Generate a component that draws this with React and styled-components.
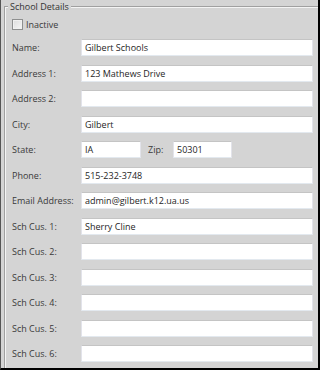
import styled, { createGlobalStyle } from "styled-components";

const GlobalStyle = createGlobalStyle`
    html, body {
        margin: 0;
        padding: 0;
        background: #d4d4d4;
    }
`

const Frame = styled.div`
    width: 320px;
    height: 370px;
    box-sizing: border-box;
    background: #d4d4d4;
    border-right: 2px solid #000;
    border-bottom: 2px solid #000;
    border-left: 1px solid #555;
    padding-left: 3px;
    overflow: hidden;
    font-family: "Open Sans", "Noto Sans", sans-serif;
    font-size: 9px;
    color: #3a3a3a;
`
const Group = styled.fieldset`
    margin: 0;
    padding: 0 5px 0 6px;
    min-width: 0;
    border: 2px groove #f4f4f4;
    border-right: none;
    border-bottom: none;
    height: 100%;
    box-sizing: border-box;
`
const Legend = styled.legend`
    margin-left: -4px;
    padding: 0 2px;
    line-height: 14px;
    font-size: 9px;
    color: #333;
`
const CheckRow = styled.label`
    height: 21px;
    display: flex;
    align-items: center;
    gap: 3px;
`
const Box = styled.span`
    width: 11px;
    height: 11px;
    box-sizing: border-box;
    border: 1px solid #8e8f8f;
    background: linear-gradient(135deg, #dcdcdc 0%, #f6f6f6 100%);
    box-shadow: inset 0 0 0 1px #f0f0f0;
`
const Row = styled.div`
    display: grid;
    grid-template-columns: 69px 1fr;
    align-items: center;
    height: 25.5px;
`
const Label = styled.span`
    white-space: nowrap;
`
const Inline = styled.div`
    display: flex;
    align-items: center;
`
const Field = styled.input`
    box-sizing: border-box;
    width: ${props => props.w ? props.w + 'px' : '100%'};
    height: 17px;
    margin: 0;
    padding: 0 3px;
    border: 1px solid;
    border-color: #c4c4c4 #e2e3ea #e3e9ef #e2e3ea;
    background: #fff;
    font-family: "Open Sans", "Noto Sans", sans-serif;
    font-size: 9px;
    color: #1e1e1e;
    outline: none;
`
const ZipLabel = styled.span`
    margin-left: 7px;
    width: 25px;
`

const rows = [
    ["Name:", "Gilbert Schools"],
    ["Address 1:", "123 Mathews Drive"],
    ["Address 2:", ""],
    ["City:", "Gilbert"],
]
const rowsAfter = [
    ["Phone:", "515-232-3748"],
    ["Email Address:", "admin@gilbert.k12.ua.us"],
    ["Sch Cus. 1:", "Sherry Cline"],
    ["Sch Cus. 2:", ""],
    ["Sch Cus. 3:", ""],
    ["Sch Cus. 4:", ""],
    ["Sch Cus. 5:", ""],
    ["Sch Cus. 6:", ""],
]

const App = () => {
    return (
        <>
            <GlobalStyle />
            <Frame>
                <Group>
                    <Legend>School Details</Legend>
                    <CheckRow>
                        <Box />
                        <span>Inactive</span>
                    </CheckRow>
                    {rows.map(([label, value]) => (
                        <Row key={label}>
                            <Label>{label}</Label>
                            <Field readOnly defaultValue={value} />
                        </Row>
                    ))}
                    <Row>
                        <Label>State:</Label>
                        <Inline>
                            <Field readOnly defaultValue="IA" w={60} />
                            <ZipLabel>Zip:</ZipLabel>
                            <Field readOnly defaultValue="50301" w={59} />
                        </Inline>
                    </Row>
                    {rowsAfter.map(([label, value]) => (
                        <Row key={label}>
                            <Label>{label}</Label>
                            <Field readOnly defaultValue={value} />
                        </Row>
                    ))}
                </Group>
            </Frame>
        </>
    );
};

export default App;
